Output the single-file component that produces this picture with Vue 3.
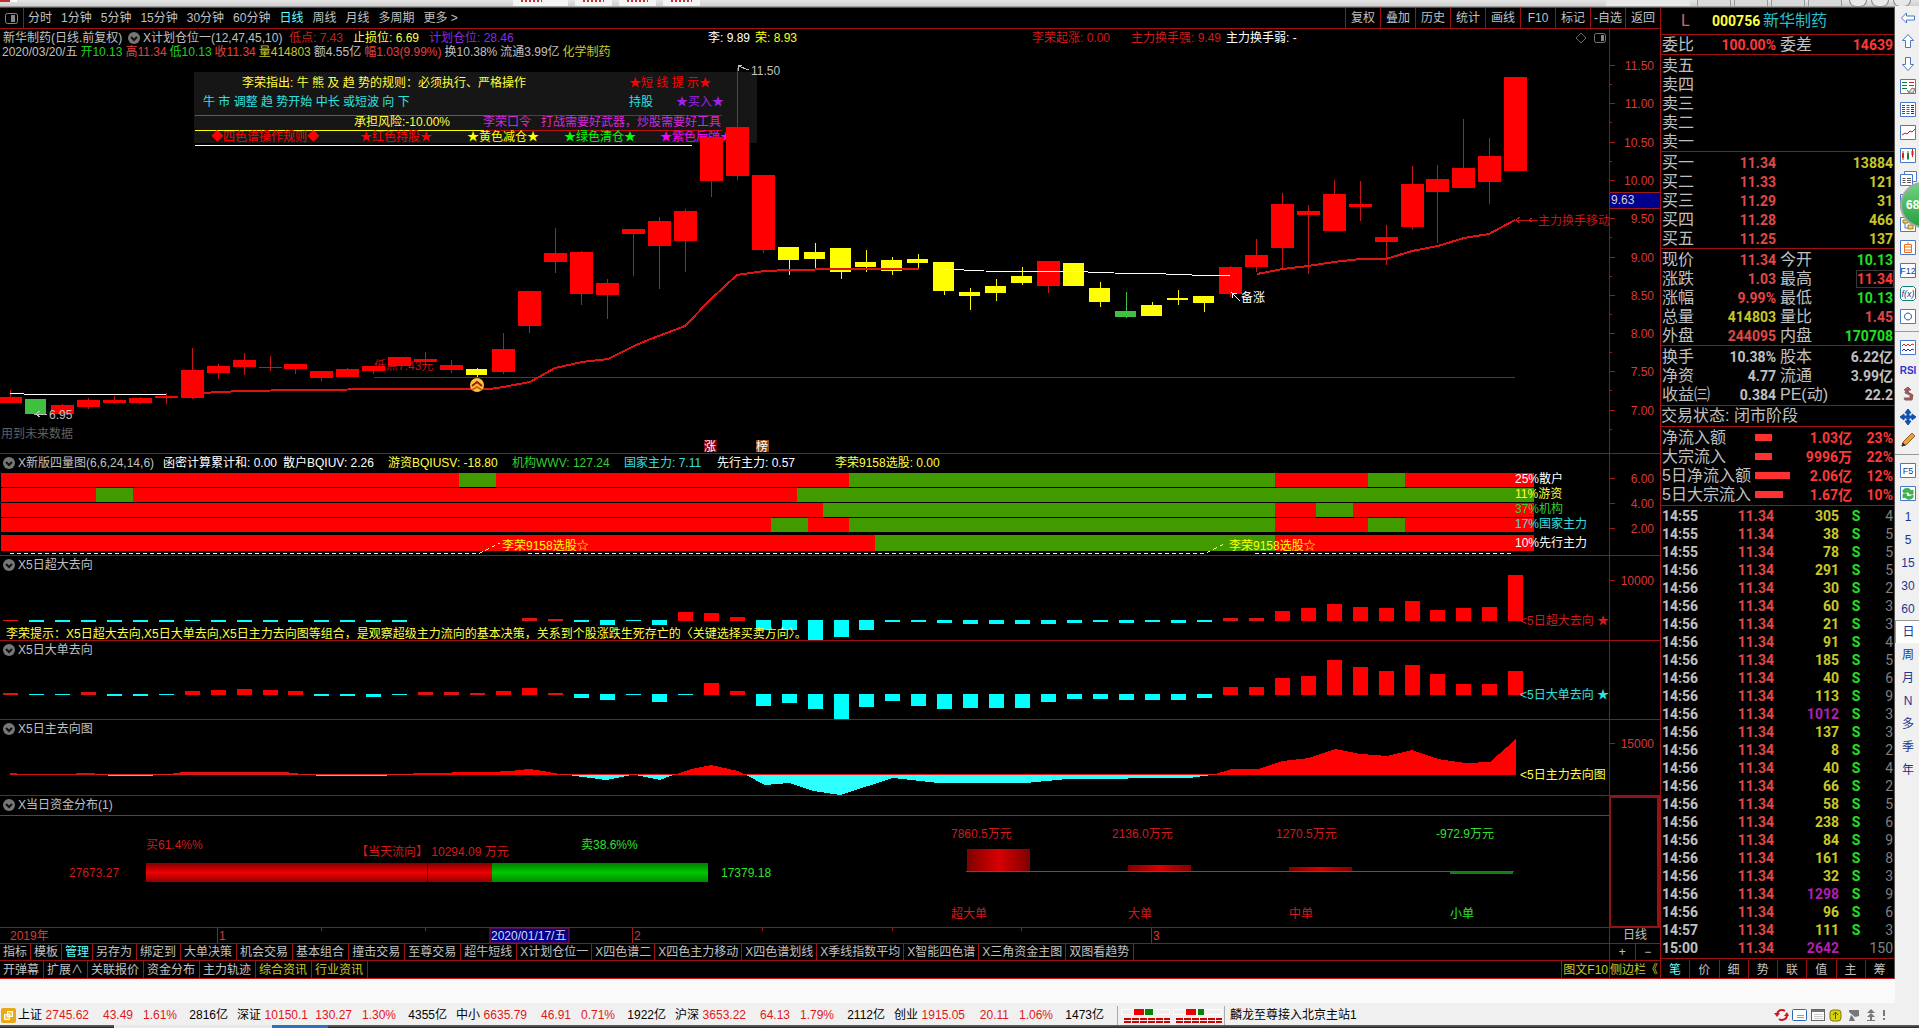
<script setup>
const W = 1609
const pct = (x) => (x / W) * 100 + '%'

const R = '#ff0000'
const Y = '#ffff00'
const G = '#40c040'
const C = '#00ffff'
const DK = '#409a00'
const TXT = '#c0c0c0'
const M = '#d428d4'

const periods = ['分时', '1分钟', '5分钟', '15分钟', '30分钟', '60分钟', '日线', '周线', '月线', '多周期', '更多 >']
const tools = ['复权', '叠加', '历史', '统计', '画线', 'F10', '标记', '-自选', '返回']

/* header fields: [start, colour, text]; each field is as wide as the distance to the next one */
const fields = (list) =>
  list.map(([at, color, text], i) => ({
    color,
    text,
    width: list[i + 1] ? list[i + 1][0] - at + 'px' : 'auto',
  }))

/* candles: [top, bottom, high, low, colour] in chart pixels */
const candles = [
  [397, 403, 390, 403, R], [399, 414, 399, 414, G], [405, 414, 404, 414, R], [400, 407, 398, 409, R],
  [400, 403, 396, 404, R], [398, 403, 397, 404, R], [396, 398, 393, 404, R], [370, 398, 348, 399, R],
  [366, 373, 364, 379, R], [360, 367, 353, 375, R], [367, 368, 356, 371, R], [364, 369, 364, 374, R],
  [371, 378, 371, 381, R], [369, 377, 368, 377, R], [366, 371, 366, 374, R], [357, 366, 357, 366, R],
  [359, 362, 352, 365, R], [365, 370, 360, 373, R], [369, 375, 368, 377, Y], [349, 372, 333, 374, R],
  [291, 326, 291, 333, R], [253, 262, 228, 273, R], [252, 294, 251, 305, R], [283, 295, 279, 319, R],
  [229, 234, 229, 276, R], [221, 246, 217, 289, R], [211, 241, 209, 272, R], [137, 181, 137, 197, R],
  [127, 176, 68, 180, R], [175, 250, 175, 253, R], [247, 260, 247, 275, Y], [252, 259, 243, 268, Y],
  [248, 272, 248, 279, Y], [262, 267, 250, 272, Y], [260, 271, 257, 275, Y], [259, 263, 254, 269, Y],
  [262, 291, 262, 295, Y], [292, 296, 288, 310, Y], [286, 293, 279, 301, Y], [276, 283, 267, 285, Y],
  [261, 286, 261, 293, R], [263, 286, 263, 286, Y], [288, 302, 282, 307, Y], [311, 317, 292, 318, G],
  [305, 316, 302, 316, Y], [298, 300, 290, 305, Y], [296, 303, 296, 312, Y], [267, 294, 266, 297, R],
  [255, 267, 239, 272, R], [204, 248, 193, 269, R], [211, 215, 205, 274, R], [194, 231, 180, 231, R],
  [204, 207, 181, 221, R], [237, 242, 225, 265, R], [184, 227, 166, 230, R], [179, 192, 165, 243, R],
  [168, 188, 119, 188, R], [156, 182, 138, 204, R], [77, 171, 77, 171, R],
]
const cx = (i) => Math.round(10 + i * 25.954)

const candleRects = candles.flatMap(([t, b, h, l, c], i) => {
  const w = c === R ? 23 : 21
  return [
    { x: cx(i), y: h, w: 1, h: l - h, fill: c === R ? '#c81414' : c },
    { x: cx(i) - 11, y: t, w, h: b - t, fill: c },
  ]
})

/* signed bar heights: above the base line is positive */
const xl = [1, -2, -2, -2, -2, -2, -2, -1, -2, -2, -2, -2, -2, -2, -2, -2, 0, 0, 0, 0, 3, 2, -2, -5, -1, -5, 9, 8, 4, -10, -10, -20, -17, -10, -2, -2, -3, -4, -4, -4, -4, -3, -2, -3, -2, -3, -2, 3, 3, 10, 13, 17, 14, 13, 20, 11, 13, 14, 46]
const lg = [2, -1, -1, 3, -2, -2, -1, 4, 5, 6, 5, 4, -2, -2, -3, -1, 3, 3, 2, 4, 7, 2, -4, -6, -1, -8, -1, 12, 4, -12, -9, -15, -25, -13, -7, -12, -15, -14, -14, -14, -8, -5, -5, -6, -6, -6, -4, 8, 8, 17, 19, 35, 28, 24, 30, 21, 11, 11, 24]
const bars = (list, base) =>
  list.map((v, i) => ({
    x: cx(i) - 7,
    y: v > 0 ? base + 1 - v : base,
    w: 15,
    h: Math.abs(v),
    fill: v > 0 ? (v < 4 ? '#dc1414' : R) : C,
  }))

const strip = (y, h, greens) => [
  { x: 1, y, w: 1533, h, fill: R },
  ...greens.map(([a, b]) => ({ x: a, y, w: b - a, h, fill: DK })),
]

const T = (x, y, fill, text) => ({ x, y, fill, text })

const panes = [
  {
    key: 'main', top: 59, svg: 394,
    rows: [
      fields([[0, TXT, '新华制药(日线.前复权)'], [125, 'icon', ''], [140, TXT, 'X计划仓位一(12,47,45,10)'], [286, '#c82020', '低点: 7.43'], [350, '#ffff40', '止损位: 6.69'], [426, '#8a2be2', '计划仓位: 28.46'], [705, '#fff', '李: 9.89'], [752, Y, '荣: 8.93'], [1029, '#d21a1a', '李荣起涨: 0.00'], [1128, '#d21a1a', '主力换手强: 9.49'], [1223, '#fff', '主力换手弱: -']]),
    ],
    under: [
      { x: 194, y: 72, w: 563, h: 71, fill: '#161616' },
      { x: 195, y: 115, w: 294, h: 1, fill: '#e000e0' },
      { x: 489, y: 115, w: 233, h: 1, fill: '#c01010' },
      { x: 195, y: 130, w: 289, h: 1, fill: Y },
      { x: 484, y: 130, w: 238, h: 1, fill: '#c01010' },
      { x: 195, y: 145, w: 497, h: 1, fill: '#fff' },
    ],
    underTexts: [
      T(242, 82, '#ffff40', '李荣指出: 牛 熊 及 趋 势的规则：必须执行、严格操作'),
      T(629, 82, R, '★短 线 提 示★'),
      T(203, 101, '#30e0e0', '牛 市 调整 趋 势开始 中长 或短波 向 下'),
      T(629, 101, '#30e0e0', '持股'),
      T(676, 101, '#a020f0', '★买入★'),
      T(354, 121, '#ffff40', '承担风险:-10.00%'),
      T(483, 121, M, '李荣口令'),
      T(541, 121, M, '打战需要好武器，炒股需要好工具'),
      T(211, 136, R, '◆四色谱操作规则◆'),
      T(360, 136, R, '★红色持股★'),
      T(467, 136, Y, '★黄色减仓★'),
      T(564, 136, '#00ff00', '★绿色清仓★'),
      T(660, 136, '#ff00ff', '★紫色后弹★'),
      T(374, 365, '#c01010', '低点7.43元'),
    ],
    rects: [
      ...candleRects,
      { x: 374, y: 377, w: 1141, h: 1, fill: '#b01010' },
      { x: 704, y: 440, w: 13, h: 12, fill: '#800000' },
      { x: 756, y: 440, w: 13, h: 12, fill: '#8b4513' },
    ],
    lines: [
      { p: '204,393 218,392 245,391 297,390 400,389 490,389 503,387 530,382 555,368 582,362 608,359 634,346 648,340 685,326 711,299 737,275 764,271 790,270 841,269 919,269', c: '#dc1414', w: 2 },
      { p: '1257,274 1283,269 1308,266 1334,262 1360,259 1386,259 1412,251 1438,246 1464,238 1489,234 1515,220', c: '#dc1414', w: 2 },
      { p: '10,393 24,394 166,394', c: '#fff', w: 1 },
      { p: '944,269 984,271 1088,272 1114,273 1166,274 1192,275 1230,275', c: '#fff', w: 1 },
      { p: '47,414 36,414 40,411 36,414 40,417', c: TXT, w: 1 },
      { p: '749,70 738,66 742,65 738,66 739,71', c: TXT, w: 1 },
      { p: '1240,301 1232,293 1237,294 1232,293 1233,298', c: '#fff', w: 1 },
      { p: '1527,220 1516,220 1520,217 1516,220 1520,223', c: '#c81414', w: 1 },
      { p: '1538,220 1529,220 1532,218 1529,220 1532,222', c: '#c81414', w: 1 },
    ],
    texts: [
      T(49, 414, TXT, '6.95'), T(1, 433, '#606060', '用到未来数据'), T(751, 70, TXT, '11.50'),
      T(1241, 297, '#fff', '备涨'), T(1538, 220, '#c81414', '主力换手移动'),
      T(704, 446, '#fff', '涨'), T(756, 446, '#fff', '榜'),
    ],
    axis: ['11.50', '11.00', '10.50', '10.00', '9.50', '9.00', '8.50', '8.00', '7.50', '7.00'].map((t, i) => [65 + Math.round(i * 38.3), t]),
    minor: 19, cursor: true, axisTop: 29, axisH: 424,
  },
  {
    key: 'four', top: 471, svg: 84,
    rows: [fields([[0, 'icon', ''], [15, TXT, 'X新版四量图(6,6,24,14,6)'], [160, '#fff', '函密计算累计和: 0.00'], [280, '#fff', '散户BQIUV: 2.26'], [385, '#ffff40', '游资BQIUSV: -18.80'], [509, '#30d030', '机构WWV: 127.24'], [621, '#30e0e0', '国家主力: 7.11'], [714, '#fff', '先行主力: 0.57'], [832, '#ffff40', '李荣9158选股: 0.00']])],
    rects: [
      ...strip(473, 14, [[459, 496], [849, 1275], [1368, 1405]]),
      ...strip(488, 14, [[96, 133], [797, 1534]]),
      ...strip(503, 14, [[823, 1275], [1316, 1353]]),
      ...strip(518, 14, [[771, 808], [849, 1275], [1368, 1405]]),
      ...strip(535, 16, [[875, 1275]]),
    ],
    lines: [
      { p: '10,553 480,553 500,543', c: '#ffff60', w: 1, dash: '4 3' },
      { p: '528,553 1206,553 1226,543', c: '#ffff60', w: 1, dash: '4 3' },
      { p: '1255,553 1514,553', c: '#ffff60', w: 1, dash: '4 3' },
    ],
    texts: [
      T(502, 545, '#ffff00', '李荣9158选股☆'), T(1229, 545, '#ffff00', '李荣9158选股☆'),
      T(1515, 478, '#fff', '25%散户'), T(1515, 493, '#ffff40', '11%游资'), T(1515, 508, '#30d030', '37%机构'),
      T(1515, 523, '#30e0e0', '17%国家主力'), T(1515, 542, '#fff', '10%先行主力'),
    ],
    axis: [[478, '6.00'], [503, '4.00'], [528, '2.00']], axisTop: 454, axisH: 101,
  },
  {
    key: 'xl', top: 573, svg: 67,
    rows: [fields([[0, 'icon', ''], [15, TXT, 'X5日超大去向']])],
    rects: bars(xl, 620), lines: [],
    texts: [T(6, 633, '#ffff40', '李荣提示：X5日超大去向,X5日大单去向,X5日主力去向图等组合，是观察超级主力流向的基本决策，关系到个股涨跌生死存亡的〈关键选择买卖方向〉。'), T(1520, 620, '#d21a1a', '<5日超大去向 ★')],
    axis: [[580, '10000']], axisTop: 556, axisH: 84,
  },
  {
    key: 'lg', top: 658, svg: 61,
    rows: [fields([[0, 'icon', ''], [15, TXT, 'X5日大单去向']])],
    rects: bars(lg, 694), lines: [],
    texts: [T(1520, 694, '#30e0e0', '<5日大单去向 ★')],
    axis: [], axisTop: 641, axisH: 78,
  },
  {
    key: 'flow', top: 737, svg: 58,
    rows: [fields([[0, 'icon', ''], [15, TXT, 'X5日主去向图']])],
    rects: [{ x: 10, y: 774, w: 1505, h: 1, fill: '#e02020' }],
    areas: [
      { p: '10,775 10,773 24,774 75,774 76,773 95,773 96,775', c: '#d01414' },
      { p: '173,775 173,773 186,772 284,772 303,774 303,775', c: '#e01414' },
      { p: '413,775 413,773 490,772 510,771 529,769 543,771 560,774 560,775', c: R },
      { p: '673,775 691,769 711,765 738,771 746,775', c: R },
      { p: '1212,775 1232,769 1258,769 1283,761 1309,758 1335,749 1361,754 1387,756 1412,750 1438,759 1465,763 1490,762 1516,739 1516,775', c: R },
      { p: '108,776 153,776 153,775 108,775', c: '#c0b0b0' },
      { p: '316,776 387,776 387,775 316,775', c: '#c0b0b0' },
      { p: '568,775 606,780 631,775', c: '#30ffff' },
      { p: '636,775 660,780 673,775', c: '#30ffff' },
      { p: '746,775 765,785 789,783 814,791 840,795 893,778 938,783 1026,783 1067,779 1189,778 1212,775', c: '#30ffff' },
    ],
    lines: [],
    texts: [T(1520, 774, '#ffff40', '<5日主力去向图')],
    axis: [[743, '15000']], axisTop: 720, axisH: 75,
  },
  {
    key: 'fund', top: 813, svg: 114,
    rows: [fields([[0, 'icon', ''], [15, TXT, 'X当日资金分布(1)']])],
    rects: [
      { x: 0, y: 815, w: 1609, h: 1, fill: '#c01818' },
      { x: 146, y: 863, w: 346, h: 19, fill: 'url(#redbar)' },
      { x: 427, y: 863, w: 1, h: 19, fill: '#400' },
      { x: 492, y: 863, w: 216, h: 19, fill: 'url(#greenbar)' },
      { x: 967, y: 849, w: 63, h: 22, fill: 'url(#redcol)' },
      { x: 1128, y: 865, w: 63, h: 6, fill: 'url(#redcol)' },
      { x: 1289, y: 867, w: 63, h: 4, fill: 'url(#redcol)' },
      { x: 966, y: 871, w: 548, h: 1, fill: '#d02020' },
      { x: 1450, y: 872, w: 63, h: 2, fill: '#108010' },
    ],
    lines: [],
    texts: [
      T(146, 844, '#d21a1a', '买61.4%%'), T(69, 872, '#d21a1a', '27673.27'), T(356, 851, '#d21a1a', '【当天流向】 10294.09 万元'),
      T(581, 844, '#30e030', '卖38.6%%'), T(721, 872, '#30e030', '17379.18'),
      T(951, 833, '#d21a1a', '7860.5万元'), T(1112, 833, '#d21a1a', '2136.0万元'), T(1276, 833, '#d21a1a', '1270.5万元'), T(1436, 833, '#30e030', '-972.9万元'),
      T(951, 913, '#d21a1a', '超大单'), T(1128, 913, '#d21a1a', '大单'), T(1289, 913, '#d21a1a', '中单'), T(1450, 913, '#30e030', '小单'),
    ],
    axis: [], boxed: true, axisTop: 796, axisH: 131,
  },
]

const summary = [
  [TXT, '2020/03/20/五'], ['#20d020', '开10.13'], ['#e04040', '高11.34'], ['#20d020', '低10.13'], ['#e04040', '收11.34'],
  ['#c8c828', '量414803'], [TXT, '额4.55亿'], ['#e04040', '幅1.03(9.99%)'], [TXT, '换10.38%'], [TXT, '流通3.99亿'], ['#c8c828', '化学制药'],
]

const dates = [[10, '2019年'], [219, '1'], [634, '2'], [1153, '3']]
const dateTicks = [[217, 16], [632, 16], [1151, 16], [321, 3], [425, 3], [762, 3], [892, 3], [1021, 3]]

const tabs = ['指标', '模板', '管理', '另存为', '绑定到', '大单决策', '机会交易', '基本组合', '撞击交易', '至尊交易', '超牛短线', 'X计划仓位一', 'X四色谱二', 'X四色主力移动', 'X四色谱划线', 'X季线指数平均', 'X智能四色谱', 'X三角资金主图', '双图看趋势']
const tabs2 = ['开弹幕', '扩展∧', '关联报价', '资金分布', '主力轨迹', '综合资讯', '行业资讯']
const isSnug = (t) => t.length === 2 || t[0] === 'X'

const sells = ['卖五', '卖四', '卖三', '卖二', '卖一']
const buys = [['买一', '11.34', '13884'], ['买二', '11.33', '121'], ['买三', '11.29', '31'], ['买四', '11.28', '466'], ['买五', '11.25', '137']]
const stats = [
  ['现价', '11.34', 'up', '今开', '10.13', 'down'],
  ['涨跌', '1.03', 'up', '最高', '11.34', 'up boxed'],
  ['涨幅', '9.99%', 'up', '最低', '10.13', 'down'],
  ['总量', '414803', 'vol', '量比', '1.45', 'up'],
  ['外盘', '244095', 'up', '内盘', '170708', 'down'],
]
const basics = [
  ['换手', '10.38%', '股本', '6.22亿'],
  ['净资', '4.77', '流通', '3.99亿'],
  ['收益㈢', '0.384', 'PE(动)', '22.2'],
]
const flows = [['净流入额', 17, '1.03亿', '23%'], ['大宗流入', 17, '9996万', '22%'], ['5日净流入额', 35, '2.06亿', '12%'], ['5日大宗流入', 28, '1.67亿', '10%']]
const ticks = [
  ['14:55', 305, 4], ['14:55', 38, 5], ['14:55', 78, 5], ['14:56', 291, 5], ['14:56', 30, 2], ['14:56', 60, 3], ['14:56', 21, 3],
  ['14:56', 91, 4], ['14:56', 185, 5], ['14:56', 40, 6], ['14:56', 113, 9], ['14:56', 1012, 3], ['14:56', 137, 3], ['14:56', 8, 2],
  ['14:56', 40, 4], ['14:56', 66, 2], ['14:56', 58, 5], ['14:56', 238, 6], ['14:56', 84, 9], ['14:56', 161, 8], ['14:56', 32, 3],
  ['14:56', 1298, 9], ['14:56', 96, 6], ['14:57', 111, 3], ['15:00', 2642, 150],
]
const tickTabs = ['笔', '价', '细', '势', '联', '值', '主', '筹']

const indices = [
  ['上证', '2745.62', '43.49', '1.61%', '2816亿'],
  ['深证', '10150.1', '130.27', '1.30%', '4355亿'],
  ['中小', '6635.79', '46.91', '0.71%', '1922亿'],
  ['沪深', '3653.22', '64.13', '1.79%', '2112亿'],
  ['创业', '1915.05', '20.11', '1.06%', '1473亿'],
]

/* side bar icons: lists of [path, fill, stroke] on an 18 x 18 grid */
const B = '#4a78c8'
const frame = ['M1.5 1.5h15v14h-15z', '#fff', B]
const icons = [
  { name: '后退', s: [['M2.5 9l5-5v3h8v4h-8v3z', '#fff', B]] },
  { name: '向上', s: [['M9 2.5l5.500 6h-3v7h-5v-7h-3z', '#fff', B]] },
  { name: '向下', s: [['M9 15.5l5.500-6h-3v-7h-5v7h-3z', '#fff', B]] },
  { name: '报价', s: [frame, ['M3 4.500h5M3 7.500h5M3 10.500h5', 'none', '#108030'], ['M10 4.500h5M10 7.500h5', 'none', '#d02020'], ['M8 12l2 2 3-4 3 1-2 4h-4z', '#ddd', '#777']] },
  { name: '列表', s: [frame, ['M3 4.500h3M3 6.500h3M3 8.500h3M3 10.500h3M3 12.500h3', 'none', '#d02020'], ['M7.500 4.500h3M7.500 6.500h3M7.500 8.500h3M7.500 10.500h3M7.500 12.500h3', 'none', '#108030'], ['M12 4.500h3M12 6.500h3M12 8.500h3M12 10.500h3M12 12.500h3', 'none', '#1020c0']] },
  { name: '走势', s: [frame, ['M3 11l3-2 2 1 3-3 2 1 3-3', 'none', '#c02020']] },
  { name: 'K线', s: [frame, ['M3.500 6.500h1v4h-1zM13 4h1v4h-1zM4 4v9M13.500 2v8', '#d02020', '#d02020'], ['M8.500 6.500h1v5h-1zM9 4v9', '#108030', '#108030']] },
  { name: '窗口', s: [['M5.500 1.500h12v10h-12z', '#fff', B], ['M1.500 4.500h12v11h-12z', '#fff', B], ['M3.500 8.500h3M8 8.500h4M3.500 10.500h3M8 10.500h4M3.500 12.500h3M8 12.500h4', 'none', '#555']] },
  { name: '星级', s: [frame] },
  { name: '结构', s: [frame, ['M4 4h5v3h-5zM9 9h5v4h-5z', '#f0d060', '#a08020'], ['M6 7v5h3', 'none', B]] },
  { name: '自选', s: [frame, ['M5.500 5.500h7v8h-7zM5.500 8h7M5.500 11h7M9 3v2', 'none', '#f07020']] },
  { name: 'F12', s: [frame], t: 'F12', c: '#104090' },
  { name: '公式', s: [['M3.500 1.500h11l2 2v10l-2 2h-11l-2-2v-10z', '#fff', '#108070']], t: 'f(x)', c: '#104090', it: true },
  { name: '圆', s: [frame, ['M9 5a3.500 3.500 0 1 0 .1 0z', 'none', '#2050a0']] },
  { sep: true },
  { name: '曲线', s: [frame, ['M3 7l2-2 2 2 2-2 2 2 2-2 2 1', 'none', '#d02020'], ['M3 12l2-2 2 2 2-2 2 2 2-2 2 1', 'none', '#2030c0']] },
  { name: 'RSI', s: [], t: 'RSI', c: '#3038c8', bold: true },
  { name: '成本', s: [['M12 5l-3-3-4 3h2l-1 3 5 2v3h-6l1 2h7l1-5-5-3 1-2z', '#b05050', '#806060']] },
  { name: '移动', s: [['M9 1l3 4h-2v3h3v-2l4 3-4 3v-2h-3v3h2l-3 4-3-4h2v-3h-3v2l-4-3 4-3v2h3v-3h-2z', '#1050b0', '#1050b0']] },
  { name: '画笔', s: [['M3 15l1-4 9-9 3 3-9 9z', '#e8a040', '#906020'], ['M3 15l1-3 2 2z', '#333', '#333']] },
  { sep: true },
  { name: 'F5', s: [frame], t: 'F5', c: '#104090' },
  { name: '刷新', s: [frame, ['M4 7a4 3 0 0 1 8-1l2-1v4h-4l1-1a3 2 0 0 0-5 0z', '#40b050', '#40b050'], ['M14 10a4 3 0 0 1-8 2l-2 1v-4h4l-1 1a3 2 0 0 0 5 1z', '#40b050', '#40b050']] },
]
const spans = ['1', '5', '15', '30', '60', '日', '周', '月', 'N', '多', '季', '年']
</script>

<template>
  <div class="app">
    <div class="topstrip">
      <i class="logo"></i>
      <i class="card wide"></i><i class="card"></i><i class="card"></i><i class="card"></i>
      <i class="pale"></i>
      <i class="key"></i><i class="key"></i><i class="key"></i><i class="key"></i>
      <i class="round"></i><i class="round"></i><i class="round"></i>
    </div>

    <div class="body">
      <div class="desk">
        <div class="workspace">
          <main class="charts">
            <nav class="periods">
              <button class="dock" aria-label="面板">
                <svg width="13" height="11"><rect x=".5" y=".5" width="12" height="10" rx="2" fill="none" stroke="#888" /><rect x="6" y="2" width="4" height="7" fill="#888" /></svg>
              </button>
              <div class="plist">
                <button v-for="p in periods" :key="p" :class="{ on: p === '日线' }">{{ p }}</button>
              </div>
              <div class="tools">
                <button v-for="t in tools" :key="t">{{ t }}</button>
              </div>
            </nav>

            <section v-for="p in panes" :key="p.key" class="pane">
              <div class="plot">
                <header v-for="(row, r) in p.rows" :key="r" class="row" :class="{ first: p.key === 'main' }">
                  <span v-for="(f, i) in row" :key="i" :style="{ color: f.color, width: f.width }">
                    <svg v-if="f.color === 'icon'" width="12" height="12"><circle cx="6" cy="6" r="6" fill="#777" /><path d="M3 5l3 3 3-3" fill="none" stroke="#111" stroke-width="2" /></svg>
                    <template v-else>{{ f.text }}</template>
                  </span>
                  <svg v-if="p.key === 'main'" class="corner" width="32" height="12">
                    <path d="M6 1l5 5-5 5-5-5z" fill="none" stroke="#666" />
                    <rect x="19.500" y="1.500" width="11" height="9" rx="2" fill="none" stroke="#777" /><rect x="26" y="3" width="3" height="6" fill="#888" />
                  </svg>
                </header>
                <header v-if="p.key === 'main'" class="row second">
                  <span v-for="s in summary" :key="s[1]" :style="{ color: s[0] }">{{ s[1] }}</span>
                </header>

                <svg class="draw" width="100%" :height="p.svg">
                  <defs v-if="p.key === 'fund'">
                    <linearGradient id="redbar" x2="0" y2="1"><stop offset="0" stop-color="#800000" /><stop offset=".5" stop-color="#f00000" /><stop offset="1" stop-color="#900000" /></linearGradient>
                    <linearGradient id="greenbar" x2="0" y2="1"><stop offset="0" stop-color="#008000" /><stop offset=".5" stop-color="#00c800" /><stop offset="1" stop-color="#008800" /></linearGradient>
                    <linearGradient id="redcol"><stop offset="0" stop-color="#800000" /><stop offset=".5" stop-color="#d80000" /><stop offset="1" stop-color="#800000" /></linearGradient>
                  </defs>
                  <svg v-if="p.under" width="100%" height="100%" :viewBox="`0 ${p.top} ${W} ${p.svg}`" preserveAspectRatio="none" shape-rendering="crispEdges">
                    <rect v-for="(r, i) in p.under" :key="i" :x="r.x" :y="r.y" :width="r.w" :height="r.h" :fill="r.fill" />
                  </svg>
                  <g v-if="p.underTexts" :transform="`translate(0 ${5 - p.top})`">
                    <text v-for="(t, i) in p.underTexts" :key="i" :x="pct(t.x)" :y="t.y" :fill="t.fill">{{ t.text }}</text>
                  </g>
                  <svg width="100%" height="100%" :viewBox="`0 ${p.top} ${W} ${p.svg}`" preserveAspectRatio="none">
                    <g shape-rendering="crispEdges">
                      <rect v-for="(r, i) in p.rects" :key="i" :x="r.x" :y="r.y" :width="r.w" :height="r.h" :fill="r.fill" />
                      <polygon v-for="(a, i) in p.areas || []" :key="'a' + i" :points="a.p" :fill="a.c" />
                      <polyline v-for="(l, i) in p.lines" :key="'l' + i" :points="l.p" fill="none" :stroke="l.c" :stroke-width="l.w" :stroke-dasharray="l.dash" />
                    </g>
                    <g v-if="p.key === 'main'">
                      <circle cx="477" cy="385" r="7" fill="#ffc040" />
                      <path d="M472 386l5-4 5 4" fill="none" stroke="#902000" stroke-width="2" />
                      <path d="M472 390l5-3 5 3" fill="none" stroke="#d06000" stroke-width="2" />
                    </g>
                  </svg>
                  <g :transform="`translate(0 ${5 - p.top})`">
                    <text v-for="(t, i) in p.texts" :key="i" :x="pct(t.x)" :y="t.y" :fill="t.fill">{{ t.text }}</text>
                  </g>
                </svg>
              </div>
              <div class="axis" :class="{ boxed: p.boxed }">
                <svg v-if="!p.boxed" width="50" :height="p.axisH" :viewBox="`0 ${p.axisTop} 50 ${p.axisH}`">
                  <g v-for="a in p.axis" :key="a[1]">
                    <rect x="0" :y="a[0]" width="5" height="1" fill="#a01818" />
                    <text x="44" :y="a[0] + 5" text-anchor="end" fill="#d83838">{{ a[1] }}</text>
                  </g>
                  <template v-if="p.minor">
                    <rect v-for="a in p.axis" :key="'m' + a[1]" x="0" :y="a[0] + p.minor" width="2" height="1" fill="#a01818" />
                  </template>
                  <g v-if="p.cursor">
                    <rect x="0" y="192" width="50" height="17" fill="#00008b" />
                    <path d="M0 192.500h50M0 208.500h50" stroke="#a01818" />
                    <text x="1" y="204" fill="#d0d0d0">9.63</text>
                  </g>
                </svg>
              </div>
            </section>

            <section class="pane dates">
              <div class="plot">
                <svg class="draw" width="100%" height="15">
                  <rect :x="pct(490)" y="0" width="79" height="15" fill="#00008b" stroke="#a01818" />
                  <text :x="pct(491)" y="12" fill="#d8d8f0">2020/01/17/五</text>
                  <text v-for="d in dates" :key="d[1]" :x="pct(d[0])" y="12" fill="#d83838">{{ d[1] }}</text>
                  <rect v-for="t in dateTicks" :key="t[0]" :x="pct(t[0])" y="0" width="1" :height="t[1]" fill="#a01818" />
                </svg>
              </div>
              <div class="axis label">日线</div>
            </section>

            <div class="tabrow">
              <button v-for="t in tabs" :key="t" :class="{ on: t === '管理', snug: isSnug(t) }">{{ t }}</button>
              <div class="zoom"><button aria-label="放大">+</button><button aria-label="缩小">−</button></div>
            </div>
            <div class="tabrow low">
              <button v-for="(t, i) in tabs2" :key="t" :class="{ gold: i > 4 }">{{ t }}</button>
              <button class="gold f10">图文F10</button>
              <button class="gold side">侧边栏《</button>
            </div>
          </main>

          <aside class="quote">
            <h1><span class="flag">L</span><b>000756</b><span class="stock">新华制药</span></h1>
            <table>
              <tbody><tr><th class="c1">委比</th><td class="c2 hot">100.00%</td><th class="c3">委差</th><td class="hot">14639</td></tr></tbody>
            </table>
            <table class="pad">
              <tbody><tr v-for="s in sells" :key="s"><th class="c1">{{ s }}</th><td></td></tr></tbody>
            </table>
            <table class="pad">
              <tbody><tr v-for="b in buys" :key="b[0]"><th class="c1">{{ b[0] }}</th><td class="c2 up">{{ b[1] }}</td><td class="c3"></td><td class="vol">{{ b[2] }}</td></tr></tbody>
            </table>
            <table class="pad">
              <tbody><tr v-for="s in stats" :key="s[0]"><th class="c1">{{ s[0] }}</th><td class="c2" :class="s[2]">{{ s[1] }}</td><th class="c3">{{ s[3] }}</th><td :class="s[5]"><span>{{ s[4] }}</span></td></tr></tbody>
            </table>
            <table class="pad loose">
              <tbody><tr v-for="s in basics" :key="s[0]"><th class="c1">{{ s[0] }}</th><td class="c2">{{ s[1] }}</td><th class="c3">{{ s[2] }}</th><td>{{ s[3] }}</td></tr></tbody>
            </table>
            <p class="state">交易状态: 闭市阶段</p>
            <table class="pad loose">
              <tbody><tr v-for="f in flows" :key="f[0]"><th class="f1">{{ f[0] }}</th><td class="f2"><i :style="{ width: f[1] + 'px' }"></i></td><td class="f3 hot">{{ f[2] }}</td><td class="hot">{{ f[3] }}</td></tr></tbody>
            </table>
            <table class="ticks">
              <tbody>
                <tr v-for="(t, i) in ticks" :key="i">
                  <td class="t1">{{ t[0] }}</td><td class="t2 up">11.34</td>
                  <td class="t3" :class="t[1] > 999 ? 'big' : 'vol'">{{ t[1] }}</td>
                  <td class="t4 down">{{ i < 24 ? 'S' : '' }}</td><td class="t5">{{ t[2] }}</td>
                </tr>
              </tbody>
            </table>
            <nav class="ticktabs"><button v-for="t in tickTabs" :key="t" :class="{ on: t === '笔' }">{{ t }}</button></nav>
          </aside>
        </div>

        <div class="blank"></div>

        <footer class="ticker">
          <svg class="app-ico" width="15" height="15"><rect width="15" height="15" rx="2" fill="#e8a818" /><path d="M6.500 3.500h5v5h-5zM3.500 6.500h5v5h-5z" fill="#f8d060" stroke="#fff" /></svg>
          <div v-for="x in indices" :key="x[0]" class="idx">
            <span class="n">{{ x[0] }}</span><span class="v">{{ x[1] }}</span><span class="v">{{ x[2] }}</span><span class="v">{{ x[3] }}</span><span class="a">{{ x[4] }}</span>
          </div>
          <svg class="meter" width="108" height="19" shape-rendering="crispEdges">
            <path d="M.5 0v19M107.500 0v19" stroke="#aaa" />
            <path d="M4 3.500h48v5h-48zM56 3.500h48v5h-48z" fill="#eee" stroke="#fff" />
            <path d="M17 3h10v6h-10zM69 3h10v6h-10z" fill="#e00" /><path d="M28 3h8v6h-8zM81 3h6v6h-6z" fill="#080" />
            <path d="M7 12.500h46M59 12.500h46M7 15.500h46M59 15.500h46" stroke="#d00000" stroke-width="2" stroke-dasharray="7 1" />
          </svg>
          <span class="server">麟龙至尊接入北京主站1</span>
          <svg class="tray" width="116" height="16">
            <path d="M3 7a5 5 0 0 1 8-3M13 8a5 5 0 0 1-8 4" fill="none" stroke="#d01818" stroke-width="2" /><path d="M0 6h6l-3 4zM10 9h5l-2-4z" fill="#d01818" />
            <rect x="18.500" y="2.500" width="14" height="11" rx="1" fill="#fff" stroke="#3068b0" /><path d="M23 8.500h7M23 10.500h7" stroke="#d0a000" />
            <rect x="37.500" y="2.500" width="13" height="11" fill="#fff" stroke="#666" /><path d="M38 4h12" stroke="#777" stroke-width="2" /><path d="M40 7.500h9M40 9.500h9M40 11.500h9" stroke="#ccc" />
            <rect x="56" y="3" width="11" height="11" rx="3" fill="#d8d010" stroke="#807800" /><path d="M61.500 12v-7M59 8l2.500-3 2.500 3" fill="none" stroke="#605800" />
            <path d="M75 3h10v6l-4 1-6-5zM77 8l-2 6h6l-2-4z" fill="#777" />
            <path d="M97 2l4 4h-8zM97 6l4 4h-8zM96 10h2v3h3v1h-8v-1h3z" fill="#777" />
            <path d="M109 3h2v6h-2zM109 11h2v2h-2z" fill="#777" />
          </svg>
        </footer>
      </div>

      <aside class="sidebar">
        <template v-for="(ic, i) in icons" :key="i">
          <hr v-if="ic.sep" />
          <button v-else :aria-label="ic.name">
            <svg width="18" height="18">
              <path v-for="(s, k) in ic.s" :key="k" :d="s[0]" :fill="s[1]" :stroke="s[2]" />
              <text v-if="ic.t" x="9" y="12" text-anchor="middle" :fill="ic.c" class="glyph" :class="{ bold: ic.bold, it: ic.it }">{{ ic.t }}</text>
            </svg>
          </button>
        </template>
        <button v-for="s in spans" :key="s" class="span" :class="{ cur: s === '日' }">{{ s }}</button>
        <div class="ball">68</div>
      </aside>
    </div>
    <div class="taskbar"><i></i><i class="blue"></i></div>
  </div>
</template>

<style>
body {
  background: #000;
  overflow: hidden;
}
</style>

<style scoped>
.app {
  font: 12px/14px 'Liberation Sans', 'Noto Sans CJK SC', sans-serif;
  color: #c0c0c0;
  background: #000;
  white-space: nowrap;
  overflow: hidden;
}
button {
  font: inherit;
  color: inherit;
  background: none;
  border: 0;
  padding: 0;
  margin: 0;
  white-space: nowrap;
}
svg {
  display: block;
}
.on {
  color: #60ffff;
}

.topstrip {
  display: flex;
  align-items: flex-start;
  height: 8px;
  padding-right: 8px;
  background: linear-gradient(#e4e4e4, #cfcfcf 6px, #707070 7px, #303030);
}
.topstrip i {
  height: 6px;
  flex: none;
}
.topstrip .logo {
  width: 17px;
  height: 2px;
  margin-right: 496px;
  background: linear-gradient(90deg, #c03030 10px, #fff 10px);
}
.card {
  width: 37px;
  margin-right: 7px;
  background: linear-gradient(90deg, #f4f4f4 7px, transparent 7px 29px, #f4f4f4 29px), repeating-linear-gradient(90deg, #c83030 0 2px, #f4f4f4 2px 4px);
  background-size: 100% 100%, 100% 2px;
  background-repeat: no-repeat;
  background-color: #f4f4f4;
}
.card.wide {
  width: 55px;
}
.pale {
  width: 84px;
  margin-left: auto;
  margin-right: 7px;
  background: #e8e8e8;
}
.key {
  width: 32px;
  margin-right: 3px;
  border: solid #999;
  border-width: 0 1px 1px;
  background: #d8d8d8;
}
.round {
  width: 16px;
  margin-left: 4px;
  border: solid #888;
  border-width: 0 1px 1px;
  border-radius: 0 0 9px 9px;
  background: #e8e8e8;
}

.body {
  display: flex;
}
.desk {
  flex: 1;
  min-width: 0;
}
.workspace {
  display: flex;
  border-right: 1px solid #555;
}
.charts {
  flex: 1;
  min-width: 0;
}

.periods {
  display: flex;
  height: 21px;
  border-bottom: 1px solid #a01010;
  box-sizing: border-box;
}
.dock {
  width: 24px;
  padding-left: 5px;
  border-right: 1px solid #a01010;
}
.plist {
  display: flex;
  gap: 9px;
  padding-left: 4px;
  flex: 1;
}
.tools {
  display: flex;
}
.tools button {
  width: 35px;
  border-left: 1px solid #a01010;
}

.pane {
  display: flex;
}
.plot {
  flex: 1;
  min-width: 0;
  border-bottom: 1px solid #a01010;
}
.row {
  display: flex;
  align-items: center;
  height: 17px;
  padding-left: 3px;
  overflow: hidden;
}
.row.first {
  height: 14px;
  padding-top: 2px;
}
.row.second {
  height: 14px;
  gap: 3px;
  padding-left: 2px;
}
.row span {
  flex: none;
}
.corner {
  margin-left: auto;
  margin-right: 2px;
}
.draw {
  overflow: hidden;
}
text {
  white-space: pre;
}
.axis {
  width: 50px;
  border-left: 1px solid #a01010;
  border-bottom: 1px solid #a01010;
}
.axis.boxed {
  width: 46px;
  border: 2px solid #901414;
  border-right-width: 3px;
}
.axis.label {
  text-align: center;
  line-height: 15px;
}
.dates {
  height: 16px;
}

.tabrow {
  display: flex;
  height: 17px;
  border-bottom: 1px solid #a01010;
  box-sizing: border-box;
}
.tabrow button {
  padding: 0 4px 0 3px;
  border-right: 1px solid #a01010;
}
.tabrow .snug {
  padding: 0 3px;
}
.tabrow.low {
  height: 18px;
  border-bottom-color: #d01010;
}
.tabrow.low button {
  padding-top: 1px;
}
.tabrow .gold {
  color: #c8c828;
}
.tabrow .f10 {
  margin-left: auto;
  padding: 0 1px;
  border-left: 1px solid #a01010;
}
.tabrow .side {
  width: 50px;
  padding: 0;
  border: 0;
  overflow: hidden;
  text-align: left;
}
.zoom {
  display: flex;
  width: 50px;
  margin-left: auto;
  border-left: 1px solid #a01010;
}
.zoom button {
  flex: 1;
  padding: 0;
}
.zoom button:last-child {
  border: 0;
}

.quote {
  width: 233px;
  border-left: 1px solid #a01010;
  display: flex;
  flex-direction: column;
  font-size: 16px;
}
.quote h1 {
  display: flex;
  align-items: center;
  height: 26px;
  margin: 0;
  border-bottom: 1px solid #a01010;
  font-size: 16px;
  font-weight: normal;
}
.flag {
  width: 51px;
  padding-left: 20px;
  box-sizing: border-box;
  color: #e06060;
}
.quote h1 b {
  width: 51px;
  color: #ffff40;
  font-family: Roboto, sans-serif;
  font-size: 14px;
}
.stock {
  color: #28c0d0;
}
.quote table {
  width: 100%;
  table-layout: fixed;
  border-collapse: separate;
  border-spacing: 0;
  padding: 0 1px;
  border-bottom: 1px solid #a01010;
}
.quote tr {
  height: 19px;
}
.quote .pad {
  padding-top: 1px;
}
.quote .pad.loose {
  padding-bottom: 1px;
}
.quote th,
.quote td {
  padding: 0;
  height: 19px;
  line-height: 16px;
}
.quote th {
  text-align: left;
  font-weight: normal;
}
.quote td {
  text-align: right;
  font-family: Roboto, 'Noto Sans CJK SC', sans-serif;
  font-size: 14px;
  font-weight: bold;
}
.c1 {
  width: 48px;
}
.c2 {
  width: 66px;
}
.c3 {
  width: 49px;
  text-indent: 4px;
}
.hot {
  color: #ff3838;
}
.up {
  color: #e04848;
}
.down {
  color: #20e020;
}
.vol {
  color: #c8c828;
}
.big {
  color: #b020b0;
}
.boxed span {
  outline: 1px solid #383838;
  color: #ff3838;
}
.state {
  height: 20px;
  margin: 0;
  line-height: 20px;
  border-bottom: 1px solid #a01010;
}
.f1 {
  width: 93px;
}
.f2 {
  width: 35px;
}
.f2 i {
  display: block;
  height: 7px;
  background: #ff3030;
}
.f3 {
  width: 62px;
}
.quote .ticks {
  padding-top: 1px;
  padding-bottom: 1px;
}
.quote .ticks tr,
.quote .ticks td {
  height: 18px;
}
.quote .t1 {
  width: 46px;
  text-align: left;
}
.t2 {
  width: 66px;
}
.t3 {
  width: 65px;
}
.quote .t4 {
  width: 28px;
  padding-left: 6px;
  box-sizing: border-box;
  text-align: center;
}
.quote .t5 {
  color: #808080;
  font-weight: normal;
}
.ticktabs {
  display: flex;
  height: 18px;
  font-size: 12px;
  border-bottom: 1px solid #d01010;
  margin-top: auto;
}
.ticktabs button {
  flex: 1;
  padding-top: 1px;
}
.ticktabs button + button {
  border-left: 1px solid #a01010;
}

.blank {
  height: 24px;
  background: #fafafa;
}
.ticker {
  display: flex;
  align-items: center;
  height: 20px;
  padding: 2px 0 0 1px;
  color: #000;
  background: #f0f0f0;
}
.app-ico {
  margin-right: 2px;
}
.idx {
  display: flex;
  width: 210px;
  margin-right: 9px;
}
.n {
  width: 27px;
}
.v {
  width: 44px;
  text-align: right;
  color: #e01818;
}
.a {
  flex: 1;
  text-align: right;
}
.meter {
  margin: 0 5px 0 4px;
}
.tray {
  margin-left: auto;
  margin-right: 5px;
}

.sidebar {
  position: relative;
  display: flex;
  flex-direction: column;
  align-items: stretch;
  width: 24px;
  box-sizing: border-box;
  margin-top: -2px;
  background: #f0f0f0;
  overflow: hidden;
}
.sidebar button {
  display: flex;
  align-items: center;
  justify-content: center;
  height: 23px;
  padding-left: 2px;
}
.sidebar hr {
  width: 100%;
  height: 1px;
  margin: 3px 0 4px;
  border: 0;
  background: #999;
}
.glyph {
  font-size: 9px;
}
.glyph.bold {
  font-size: 10px;
  font-weight: bold;
}
.glyph.it {
  font-style: italic;
}
.span {
  color: #183890;
}
.span.cur {
  background: #fff;
  border: solid #999;
  border-width: 1px 0 0 1px;
}
.ball {
  position: absolute;
  left: 5px;
  top: 176px;
  width: 46px;
  height: 46px;
  padding-left: 4px;
  box-sizing: border-box;
  border-radius: 23px;
  border: 2px solid #a8a8a8;
  background: linear-gradient(#70d080, #28a040);
  color: #fff;
  font-weight: bold;
  line-height: 42px;
}
.taskbar {
  display: flex;
  height: 3px;
  background: linear-gradient(#666, #222);
}
.taskbar i {
  width: 158px;
  margin-left: 114px;
  background: #e8e8e8;
}
.taskbar .blue {
  width: 56px;
  margin: 0;
  background: #3070c0;
}
</style>
